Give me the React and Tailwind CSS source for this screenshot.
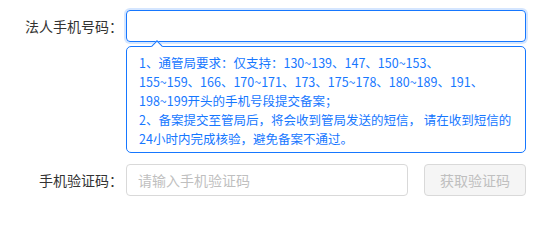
export default function App() {
    return (
        <div
            className="w-[559px] h-[203px] bg-white pt-[10px]"
            style={{ fontFamily: '"Noto Sans CJK SC", "Liberation Sans", sans-serif' }}
        >
            {/* 法人手机号码 */}
            <div className="flex items-start">
                <label className="w-[124px] h-[32px] flex items-center justify-end pr-[1px] text-[14px] text-[#333]">
                    法人手机号码：
                </label>
                <div className="ml-[2px] w-[400px]">
                    <input
                        className="w-full h-[32px] rounded-[4px] border border-[#1677ff] px-[11px] text-[14px] outline-none shadow-[0_0_0_2px_rgba(22,119,255,0.18)]"
                    />
                    <div className="relative mt-[4px] h-[107px] rounded-[5px] border border-[#1677ff] bg-white pl-[12px] pr-[6px] pt-[6px] text-[12.5px] leading-[19px] text-[#1677ff]">
                        <span className="absolute -top-[5px] left-[26px] w-[8px] h-[8px] rotate-45 border-l border-t border-[#1677ff] bg-white" />
                        <p className="whitespace-nowrap">1、通管局要求：仅支持：130~139、147、150~153、</p>
                        <p className="whitespace-nowrap">155~159、166、170~171、173、175~178、180~189、191、</p>
                        <p className="whitespace-nowrap">198~199开头的手机号段提交备案；</p>
                        <p className="whitespace-nowrap">2、备案提交至管局后，将会收到管局发送的短信， 请在收到短信的</p>
                        <p className="whitespace-nowrap">24小时内完成核验，避免备案不通过。</p>
                    </div>
                </div>
            </div>

            {/* 手机验证码 */}
            <div className="flex items-center mt-[11px]">
                <label className="w-[124px] h-[32px] flex items-center justify-end pr-[1px] text-[14px] text-[#333]">
                    手机验证码：
                </label>
                <div className="ml-[2px] w-[400px] flex gap-[16px]">
                    <input
                        placeholder="请输入手机验证码"
                        className="w-[282px] h-[32px] rounded-[4px] border border-[#d9d9d9] px-[11px] text-[14px] outline-none placeholder:text-[#bfbfbf]"
                    />
                    <button
                        disabled
                        className="w-[102px] h-[32px] rounded-[4px] border border-[#d9d9d9] bg-[#f5f5f5] text-[14px] text-[#bfbfbf]"
                    >
                        获取验证码
                    </button>
                </div>
            </div>
        </div>
    );
}
